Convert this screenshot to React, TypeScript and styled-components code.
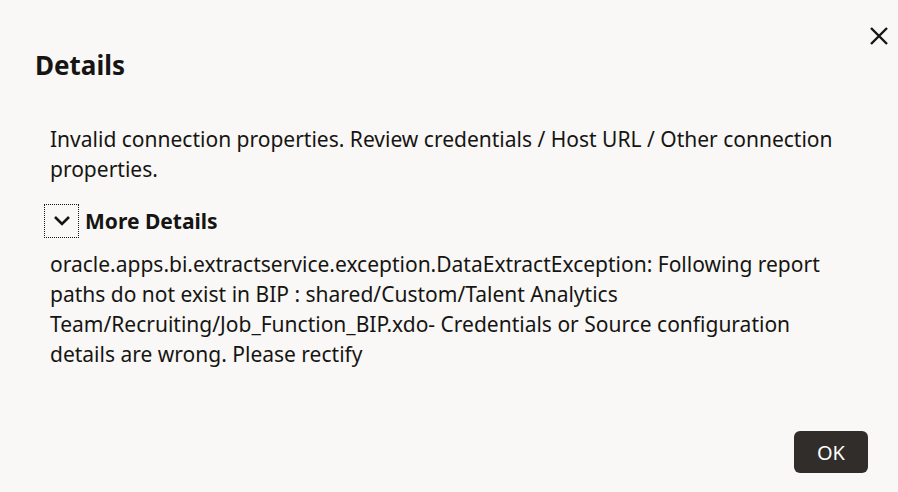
import { createGlobalStyle, styled } from "styled-components";

const Global = createGlobalStyle`
  html, body {
    margin: 0;
    padding: 0;
    background: #f9f8f6;
  }
  body {
    font-family: "Noto Sans", "Open Sans", sans-serif;
    color: #161513;
  }
`;

const Dialog = styled.div`
  width: 898px;
  height: 492px;
  box-sizing: border-box;
  display: flex;
  flex-direction: column;
  background: #f9f8f6;
`;

const Header = styled.div`
  display: flex;
  justify-content: space-between;
  align-items: flex-start;
  padding: 22px 5px 0 35px;
  height: 98px;
  box-sizing: border-box;
`;

const Title = styled.h1`
  margin: 28px 0 0;
  font-size: 26px;
  font-weight: 700;
  line-height: 30px;
`;

const CloseButton = styled.button`
  border: none;
  background: none;
  padding: 0;
  width: 28px;
  height: 28px;
  display: flex;
  align-items: center;
  justify-content: center;
  cursor: pointer;
  color: #161513;
`;

const Body = styled.div`
  flex: 1;
  padding: 26px 40px 0 50px;
`;

const Text = styled.p`
  margin: 0;
  font-size: 21px;
  line-height: 30px;
  white-space: nowrap;
`;

const Toggle = styled.div`
  display: flex;
  align-items: center;
  margin: 20px 0 11px -6px;
  gap: 6px;
`;

const ToggleIcon = styled.span`
  width: 33px;
  height: 32px;
  border: 1px dotted #161513;
  display: flex;
  align-items: center;
  justify-content: center;
`;

const ToggleLabel = styled.span`
  font-size: 21px;
  font-weight: 700;
`;

const Footer = styled.div`
  display: flex;
  justify-content: flex-end;
  padding: 0 30px 19px 0;
`;

const OkButton = styled.button`
  width: 74px;
  height: 42px;
  border: none;
  border-radius: 6px;
  background: #312d2a;
  color: #fff;
  font-family: "Noto Sans", sans-serif;
  font-size: 20px;
`;

export default function App() {
  return (
    <Dialog>
      <Global />
      <Header>
        <Title>Details</Title>
        <CloseButton aria-label="Close">
          <svg width="20" height="20" viewBox="0 0 20 20">
            <path d="M2 2 L18 18 M18 2 L2 18" stroke="currentColor" strokeWidth="2.4" />
          </svg>
        </CloseButton>
      </Header>
      <Body>
        <Text>
          Invalid connection properties. Review credentials / Host URL / Other connection
          <br />
          properties.
        </Text>
        <Toggle>
          <ToggleIcon>
            <svg width="18" height="12" viewBox="0 0 18 12">
              <path d="M2 2 L9 9 L16 2" fill="none" stroke="currentColor" strokeWidth="2.6" />
            </svg>
          </ToggleIcon>
          <ToggleLabel>More Details</ToggleLabel>
        </Toggle>
        <Text>
          oracle.apps.bi.extractservice.exception.DataExtractException: Following report
          <br />
          paths do not exist in BIP : shared/Custom/Talent Analytics
          <br />
          Team/Recruiting/Job_Function_BIP.xdo- Credentials or Source configuration
          <br />
          details are wrong. Please rectify
        </Text>
      </Body>
      <Footer>
        <OkButton>OK</OkButton>
      </Footer>
    </Dialog>
  );
}
